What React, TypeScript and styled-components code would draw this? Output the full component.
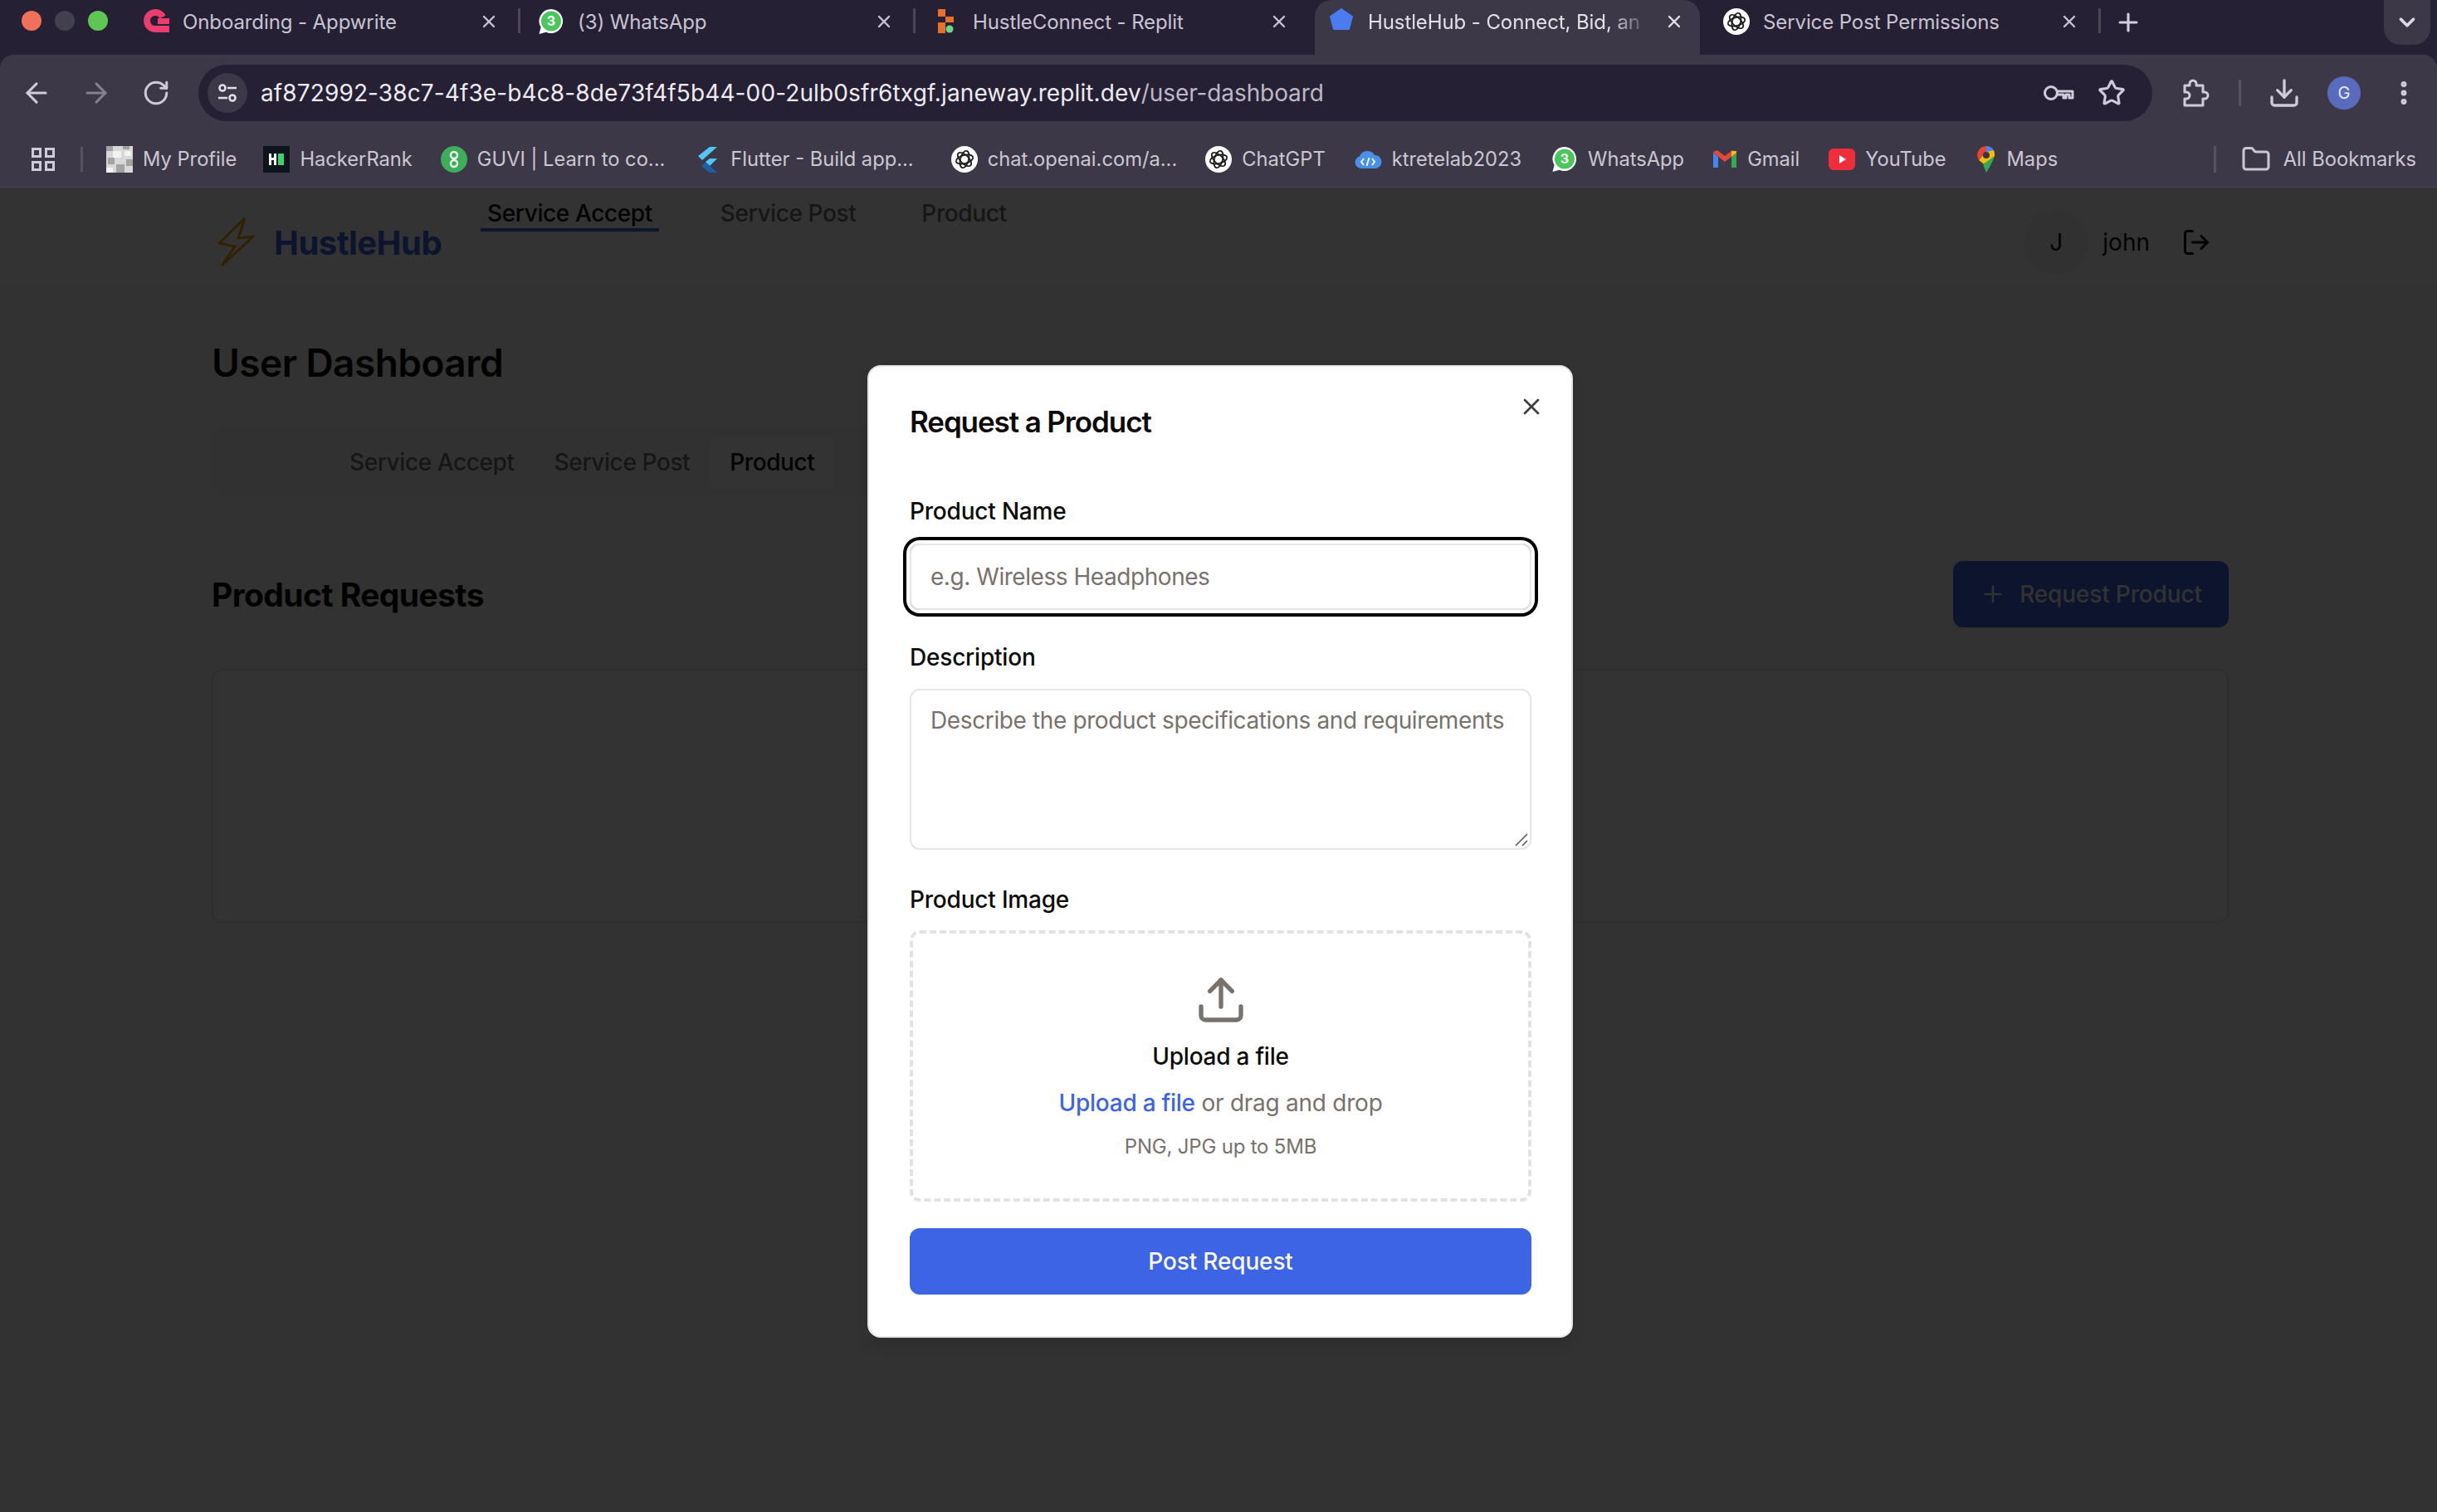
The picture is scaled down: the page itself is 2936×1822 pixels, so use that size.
import React from "react";
import styled, { createGlobalStyle } from "styled-components";
import {
  ArrowLeft,
  ArrowRight,
  ChevronDown,
  Download,
  Folder,
  LogOut,
  MoreVertical,
  Plus,
  RotateCw,
  Star,
  Upload,
  X,
} from "lucide-react";

const GlobalStyle = createGlobalStyle`
  html, body {
    margin: 0;
    padding: 0;
    background: #333;
    font-family: Inter, "Liberation Sans", sans-serif;
  }
  * { box-sizing: border-box; }
`;

const Shell = styled.div`
  width: 2936px;
  height: 1822px;
  display: flex;
  flex-direction: column;
  overflow: hidden;
  background: #252033;
`;

/* browser chrome */
const TabStrip = styled.div`
  height: 66px;
  flex: none;
  display: flex;
  padding-left: 155px;
  position: relative;
`;

const Lights = styled.div`
  position: absolute;
  left: 26px;
  top: 13px;
  display: flex;
  gap: 16px;
`;

const Light = styled.span<{ $color: string }>`
  width: 24px;
  height: 24px;
  border-radius: 50%;
  background: ${(p) => p.$color};
`;

const Tab = styled.div<{ $active?: boolean; $sep?: boolean }>`
  width: 476px;
  flex: none;
  height: 66px;
  padding: 0 30px 14px 17px;
  display: flex;
  align-items: center;
  gap: 16px;
  position: relative;
  color: ${(p) => (p.$active ? "#e4e0ea" : "#c9c4d4")};
  z-index: ${(p) => (p.$active ? 1 : 0)};

  &::before {
    content: "";
    display: ${(p) => (p.$active ? "block" : "none")};
    position: absolute;
    inset: 0 11px 0 1px;
    background: #3c3847;
    border-radius: 20px 20px 0 0;
    z-index: -1;
  }

  &::after {
    content: "";
    display: ${(p) => (p.$sep ? "block" : "none")};
    position: absolute;
    right: 4px;
    top: 10px;
    width: 3px;
    height: 30px;
    background: #4b4757;
  }
`;

const TabTitle = styled.span<{ $fade?: boolean }>`
  flex: 1;
  min-width: 0;
  white-space: nowrap;
  overflow: hidden;
  font-size: 24px;
  letter-spacing: -0.1px;
  mask-image: ${(p) => (p.$fade ? "linear-gradient(90deg, #000 85%, transparent 100%)" : "none")};
`;

const NewTab = styled.div`
  flex: none;
  width: 68px;
  height: 54px;
  margin-left: -5px;
  display: flex;
  align-items: center;
  justify-content: center;
  color: #d3cfdc;
`;

const TabMenu = styled.div`
  position: absolute;
  right: 8px;
  top: 0;
  width: 56px;
  height: 54px;
  border-radius: 0 0 20px 20px;
  background: #3c3847;
  display: flex;
  align-items: center;
  justify-content: center;
  color: #dcd8e4;
`;

const Toolbar = styled.div`
  height: 160px;
  flex: none;
  background: #3c3847;
  border-radius: 16px 16px 0 0;
  border-bottom: 1px solid #4a4658;
  display: flex;
  flex-direction: column;
`;

const AddressRow = styled.div`
  display: flex;
  align-items: center;
  height: 92px;
  padding: 12px 0 12px 8px;
`;

const NavButton = styled.div<{ $dim?: boolean }>`
  width: 72px;
  flex: none;
  display: flex;
  justify-content: center;
  color: ${(p) => (p.$dim ? "#85808f" : "#d0cbd9")};
`;

const AddressBar = styled.div`
  margin-left: 15px;
  width: 2354px;
  flex: none;
  height: 68px;
  border-radius: 34px;
  background: #252033;
  display: flex;
  align-items: center;
  padding: 0 32px 0 11px;
`;

const SiteInfo = styled.div`
  width: 48px;
  height: 48px;
  border-radius: 50%;
  background: #3c3847;
  flex: none;
  display: flex;
  align-items: center;
  justify-content: center;
  color: #e2deea;
`;

const Url = styled.div`
  margin-left: 16px;
  flex: 1;
  font-size: 28px;
  letter-spacing: 0.12px;
  color: #eeebf2;
  white-space: nowrap;

  span {
    letter-spacing: -0.1px;
    color: #bdb8c7;
  }
`;

const AddressActions = styled.div`
  display: flex;
  align-items: center;
  gap: 28px;
  color: #d0cbd9;
`;

const ToolActions = styled.div`
  display: flex;
  align-items: center;
  margin-left: 36px;
  color: #d0cbd9;
`;

const ToolDivider = styled.span<{ $h?: number }>`
  width: 3px;
  height: ${(p) => p.$h ?? 32}px;
  background: #57535f;
  flex: none;
`;

const ExtensionDivider = styled(ToolDivider)`
  margin: 0 32px 0 34px;
`;

const AppsDivider = styled(ToolDivider)`
  margin: 0 28px 0 31px;
`;

const AllDivider = styled(ToolDivider)`
  margin-left: auto;
`;

const ProfileBubble = styled.div`
  width: 40px;
  height: 40px;
  margin: 0 34px 0 32px;
  border-radius: 50%;
  background: #5a6bbd;
  color: #e8e9f6;
  font-size: 20px;
  display: flex;
  align-items: center;
  justify-content: center;
`;

const BookmarkRow = styled.div`
  flex: 1;
  display: flex;
  align-items: center;
  padding: 0 25px 0 38px;
`;

const Bookmark = styled.div<{ $after?: number }>`
  display: flex;
  align-items: center;
  gap: 12px;
  margin-right: ${(p) => 34 + (p.$after ?? 0)}px;
  font-size: 23.7px;
  color: #cbc7d3;
  white-space: nowrap;
`;

const AllBookmarks = styled(Bookmark)`
  margin: 0 0 0 30px;
  gap: 15px;
`;

/* page under the dialog */
const Page = styled.div`
  flex: 1;
  position: relative;
  background: #fafaf9;
  min-height: 0;
`;

const Header = styled.header`
  height: 121px;
  background: #fff;
  border-bottom: 1px solid #f5f5f4;
  display: flex;
  padding: 14px 0 0 263px;
`;

const Logo = styled.div`
  display: flex;
  align-items: center;
  gap: 23px;
  margin-top: 22px;
  align-self: flex-start;
  height: 60px;
  font-size: 40px;
  font-weight: 700;
  letter-spacing: -0.5px;
  color: #3c64e4;
`;

const TopNav = styled.nav`
  display: flex;
  gap: 63px;
  margin-left: 47px;
  align-items: flex-start;

  a:first-child {
    margin-right: 3px;
  }
`;

const TopLink = styled.a<{ $active?: boolean }>`
  padding: 0 8px;
  height: 39px;
  line-height: 34px;
  font-size: 28px;
  font-weight: 500;
  letter-spacing: -0.4px;
  color: ${(p) => (p.$active ? "#0c0a09" : "#78716c")};
  border-bottom: 4px solid ${(p) => (p.$active ? "#3c64e4" : "transparent")};
`;

const UserBox = styled.div`
  margin-left: auto;
  margin-right: 272px;
  height: 79px;
  margin-top: 12px;
  display: flex;
  align-items: center;
  font-size: 28px;
  color: #0c0a09;
`;

const UserCircle = styled.div`
  width: 78px;
  height: 78px;
  border-radius: 50%;
  background: #f5f5f4;
  display: flex;
  align-items: center;
  justify-content: center;
  margin-right: 17px;
`;

const UserName = styled.span`
  margin-right: 38px;
`;

const Main = styled.main`
  padding: 60px 251px 0 255px;
`;

const PageTitle = styled.h1`
  margin: 0;
  font-size: 46px;
  line-height: 60px;
  font-weight: 600;
  letter-spacing: -0.55px;
  color: #0c0a09;
`;

const TabsList = styled.div`
  margin-top: 50px;
  height: 80px;
  width: 900px;
  border-radius: 12px;
  background: #f5f5f4;
  display: flex;
  align-items: center;
  padding-left: 142px;
`;

const TabTrigger = styled.div<{ $active?: boolean }>`
  height: 63px;
  padding: 0 24px;
  border-radius: 8px;
  display: flex;
  align-items: center;
  font-size: 28px;
  font-weight: 500;
  letter-spacing: -0.4px;
  color: ${(p) => (p.$active ? "#0c0a09" : "#78716c")};
  background: ${(p) => (p.$active ? "#fff" : "transparent")};
`;

const SectionRow = styled.div`
  margin-top: 79px;
  display: flex;
  align-items: center;
  justify-content: space-between;
`;

const SectionTitle = styled.h2`
  margin: 0;
  font-size: 39px;
  font-weight: 700;
  letter-spacing: -0.6px;
  color: #0c0a09;
`;

const PrimaryButton = styled.button`
  width: 332px;
  height: 80px;
  border: 0;
  border-radius: 12px;
  background: #3c64e4;
  color: #fafaf9;
  font: 500 28px Inter, "Liberation Sans", sans-serif;
  letter-spacing: -0.15px;
  display: flex;
  align-items: center;
  justify-content: center;
  gap: 16px;
`;

const EmptyCard = styled.div`
  margin-top: 50px;
  height: 306px;
  border-radius: 12px;
  background: #fff;
  border: 2px solid #e7e5e4;
`;

/* dialog */
const Overlay = styled.div`
  position: absolute;
  inset: 0;
  background: rgba(0, 0, 0, 0.8);
  display: flex;
  align-items: flex-start;
  justify-content: center;
  padding: 214px 0 0 4px;
`;

const Dialog = styled.div`
  width: 850px;
  height: 1172px;
  background: #fff;
  border: 2px solid #e7e5e4;
  border-radius: 16px;
  padding: 44px 48px 0 49px;
  position: relative;
  box-shadow: 0 10px 15px rgba(0, 0, 0, 0.1);
`;

const CloseButton = styled.div`
  position: absolute;
  top: 32px;
  right: 32px;
  color: #3f3f3f;
  display: flex;
`;

const DialogTitle = styled.h3`
  margin: 0 0 69px;
  font-size: 35px;
  line-height: 44px;
  font-weight: 600;
  letter-spacing: -1.100px;
  color: #0c0a09;
`;

const Field = styled.div`
  display: flex;
  flex-direction: column;
`;

const Label = styled.label`
  font-size: 28px;
  line-height: 34px;
  font-weight: 500;
  letter-spacing: -0.2px;
  color: #0c0a09;
`;

const TextInput = styled.div`
  margin-top: 22px;
  height: 80px;
  border: 2px solid #e7e5e4;
  border-radius: 12px;
  padding: 0 23px;
  display: flex;
  align-items: center;
  font-size: 28px;
  letter-spacing: -0.45px;
  color: #78716c;
  box-shadow: 0 0 0 4px #fff, 0 0 0 8px #000;
  margin-bottom: 40px;
`;

const TextArea = styled.div`
  margin-top: 21px;
  height: 194px;
  border: 2px solid #e7e5e4;
  border-radius: 12px;
  padding: 19px 23px;
  font-size: 28px;
  line-height: 34px;
  letter-spacing: -0.38px;
  color: #78716c;
  white-space: nowrap;
  position: relative;
  margin-bottom: 43px;
`;

const Resizer = styled.svg`
  position: absolute;
  right: 2px;
  bottom: 2px;
`;

const DropZone = styled.div`
  margin-top: 20px;
  height: 327px;
  border: 4px dashed #e4e2e1;
  border-radius: 12px;
  display: flex;
  flex-direction: column;
  align-items: center;
  padding-top: 48px;
  color: #78716c;
  font-size: 28px;
`;

const DropTitle = styled.div`
  margin-top: 19px;
  line-height: 34px;
  font-weight: 500;
  letter-spacing: -0.25px;
  color: #0c0a09;
`;

const DropHint = styled.div`
  margin-top: 22px;
  line-height: 34px;
  letter-spacing: -0.25px;

  b {
    font-weight: 500;
    color: #3c64e4;
  }
`;

const DropNote = styled.div`
  margin-top: 21px;
  font-size: 24px;
  line-height: 30px;
  letter-spacing: -0.2px;
`;

const SubmitButton = styled(PrimaryButton)`
  margin-top: 32px;
  width: 100%;
`;

/* favicons and other small drawings */
const Appwrite = () => (
  <svg width="32" height="32" viewBox="0 0 32 32">
    <path d="M24 10.500A10 10 0 1 0 15 25h17" fill="none" stroke="#ea3f6e" strokeWidth="8" />
    <path d="M18 12h14v7H18z" fill="#ea3f6e" />
  </svg>
);

const WhatsApp = () => (
  <svg width="32" height="32" viewBox="0 0 32 32">
    <path d="M16 1a14.500 14.500 0 0 0-12.400 22L1.500 31l8.300-2.200A14.500 14.500 0 1 0 16 1z" fill="#fff" />
    <circle cx="16" cy="15.500" r="12" fill="#4ac75c" />
    <text x="16" y="21" textAnchor="middle" fontSize="16" fontWeight="700" fill="#fff" fontFamily="Inter">3</text>
  </svg>
);

const Replit = () => (
  <svg width="32" height="32" viewBox="0 0 32 32">
    <path d="M6 1h9v9H6zM15 10h10v7H15zM6 17h9v13H6z" fill="#e8702a" />
    <circle cx="20" cy="25" r="4.500" fill="#6bd68b" />
  </svg>
);

const Pentagon = () => (
  <svg width="32" height="32" viewBox="0 0 32 32">
    <path d="M16 1l13 9-4 15H7L3 10z" fill="#4a7cf0" strokeLinejoin="round" stroke="#4a7cf0" strokeWidth="2" />
  </svg>
);

const OpenAI = () => (
  <svg width="32" height="32" viewBox="0 0 32 32" fill="none" stroke="#1a1a1a" strokeWidth="1.700">
    <circle cx="16" cy="16" r="16" fill="#fff" stroke="none" />
    <ellipse cx="16" cy="16" rx="5" ry="10.500" transform="rotate(15 16 16)" />
    <ellipse cx="16" cy="16" rx="5" ry="10.500" transform="rotate(75 16 16)" />
    <ellipse cx="16" cy="16" rx="5" ry="10.500" transform="rotate(135 16 16)" />
  </svg>
);

const ProfileThumb = () => (
  <svg width="32" height="32" viewBox="0 0 32 32">
    <rect width="32" height="32" fill="#d8d8d8" />
    <path d="M0 0h8v6H0zM20 0h8v4h-8zM2 14h8v8H2zM12 22h10v10H12zM24 16h8v8h-8z" fill="#a3a3a3" />
    <path d="M8 6h10v8H8zM0 26h8v6H0zM22 6h8v6h-8z" fill="#f2f2f2" />
  </svg>
);

const HackerRank = () => (
  <svg width="32" height="32" viewBox="0 0 32 32">
    <rect width="32" height="32" fill="#0e141e" />
    <path d="M7 9h3v5h3V9h3v14h-3v-6h-3v6H7z" fill="#fff" />
    <rect x="18" y="9" width="7" height="14" fill="#39d26f" />
  </svg>
);

const Guvi = () => (
  <svg width="32" height="32" viewBox="0 0 32 32">
    <circle cx="16" cy="16" r="16" fill="#3fae5c" />
    <circle cx="16" cy="11" r="4" fill="none" stroke="#e8f7ec" strokeWidth="2.500" />
    <circle cx="16" cy="21" r="4" fill="none" stroke="#e8f7ec" strokeWidth="2.500" />
  </svg>
);

const Flutter = () => (
  <svg width="32" height="32" viewBox="0 0 32 32">
    <path d="M19 1h9L10 17l-5-5z" fill="#54c5f8" />
    <path d="M19 15h9l-9 9-5-5z" fill="#54c5f8" />
    <path d="M14 19l5 5 9 8h-9l-10-8z" fill="#1c5fa8" />
  </svg>
);

const CloudCode = () => (
  <svg width="34" height="32" viewBox="0 0 34 32">
    <path d="M9 27a7.500 7.500 0 0 1-2-14.700A10 10 0 0 1 25 11a8 8 0 0 1 1 16z" fill="#4a90e8" />
    <path d="M12 15l-3 4 3 4M22 15l3 4-3 4M18.500 14l-3 10" stroke="#fff" strokeWidth="1.800" fill="none" />
  </svg>
);

const Gmail = () => (
  <svg width="30" height="32" viewBox="0 0 30 32">
    <path d="M1 8v18h6V13z" fill="#4285f4" />
    <path d="M23 13v13h6V8z" fill="#34a853" />
    <path d="M1 8l14 11L29 8v-1l-5-2-9 7-9-7-5 2z" fill="#e04a38" />
    <path d="M23 13l6-5V6l-6 0z" fill="#f6bb1c" />
  </svg>
);

const YouTube = () => (
  <svg width="32" height="32" viewBox="0 0 32 32">
    <rect y="3" width="32" height="26" rx="6" fill="#ee2d3d" />
    <path d="M13 11l8 5-8 5z" fill="#fff" />
  </svg>
);

const Maps = () => (
  <svg width="24" height="32" viewBox="0 0 24 32">
    <path d="M12 0a11 11 0 0 0-9 17l9-10z" fill="#ea4335" />
    <path d="M12 0a11 11 0 0 1 9 5l-9 8z" fill="#4285f4" />
    <path d="M3 17l9-10 9-2a11 11 0 0 1 1 7L12 24z" fill="#fbbc04" />
    <path d="M12 32s7-11 10-20L8 22z" fill="#34a853" />
    <circle cx="12" cy="11" r="4" fill="#3a3646" />
  </svg>
);

const AppsGrid = () => (
  <svg width="28" height="28" viewBox="0 0 28 28" fill="none" stroke="#d0cbd9" strokeWidth="3">
    <rect x="1.500" y="1.500" width="9" height="9" />
    <rect x="17.500" y="1.500" width="9" height="9" />
    <rect x="1.500" y="17.500" width="9" height="9" />
    <rect x="17.500" y="17.500" width="9" height="9" />
  </svg>
);

const TuneIcon = () => (
  <svg width="28" height="24" viewBox="0 0 28 24" fill="none" stroke="currentColor" strokeWidth="2.600">
    <circle cx="8" cy="6" r="3.500" />
    <path d="M14 6h11M3 18h11" />
    <circle cx="20" cy="18" r="3.500" />
  </svg>
);

const KeyIcon = () => (
  <svg width="38" height="24" viewBox="0 0 38 24" fill="none" stroke="currentColor" strokeWidth="3">
    <circle cx="10" cy="12" r="7.500" />
    <path d="M18 10h18v8h-4v-4h-4v4h-3v-4h-7" strokeLinejoin="round" />
  </svg>
);

const PuzzleIcon = () => (
  <svg width="34" height="34" viewBox="0 0 34 34" fill="none" stroke="currentColor" strokeWidth="3" strokeLinejoin="round">
    <path d="M3 8h6V6a4 4 0 0 1 8 0v2h8v8h2a4 4 0 0 1 0 8h-2v8H3v-8h2a4 4 0 0 0 0-8H3z" />
  </svg>
);

const Bolt = () => (
  <svg width="44" height="60" viewBox="0 0 44 60" fill="none" stroke="#f59e0b" strokeWidth="3" strokeLinejoin="miter">
    <path d="M32 1L1 31l19 4L4 58l38-35-18 2z" />
  </svg>
);

const tabs = [
  { icon: <Appwrite />, title: "Onboarding - Appwrite", sep: true },
  { icon: <WhatsApp />, title: "(3) WhatsApp", sep: true },
  { icon: <Replit />, title: "HustleConnect - Replit", sep: false },
  { icon: <Pentagon />, title: "HustleHub - Connect, Bid, an", active: true },
  { icon: <OpenAI />, title: "Service Post Permissions", sep: true },
];

const bookmarks = [
  { icon: <ProfileThumb />, label: "My Profile", after: -2 },
  { icon: <HackerRank />, label: "HackerRank" },
  { icon: <Guvi />, label: "GUVI | Learn to co...", after: 1 },
  { icon: <Flutter />, label: "Flutter - Build app...", after: 11 },
  { icon: <OpenAI />, label: "chat.openai.com/a..." },
  { icon: <OpenAI />, label: "ChatGPT" },
  { icon: <CloudCode />, label: "ktretelab2023", after: 2 },
  { icon: <WhatsApp />, label: "WhatsApp" },
  { icon: <Gmail />, label: "Gmail", after: 1 },
  { icon: <YouTube />, label: "YouTube", after: 3 },
  { icon: <Maps />, label: "Maps" },
];

const App = () => {
  return (
    <Shell>
      <GlobalStyle />
      <TabStrip>
        <Lights>
          <Light $color="#f1705c" />
          <Light $color="#43404f" />
          <Light $color="#5fc655" />
        </Lights>
        {tabs.map((t) => (
          <Tab key={t.title} $active={t.active} $sep={t.sep}>
            {t.icon}
            <TabTitle $fade={t.active}>{t.title}</TabTitle>
            <X size={24} strokeWidth={2.4} />
          </Tab>
        ))}
        <NewTab>
          <Plus size={34} strokeWidth={2.2} />
        </NewTab>
        <TabMenu>
          <ChevronDown size={30} strokeWidth={3} />
        </TabMenu>
      </TabStrip>

      <Toolbar>
        <AddressRow>
          <NavButton>
            <ArrowLeft size={38} strokeWidth={1.9} />
          </NavButton>
          <NavButton $dim>
            <ArrowRight size={38} strokeWidth={1.9} />
          </NavButton>
          <NavButton>
            <RotateCw size={34} strokeWidth={2.1} />
          </NavButton>
          <AddressBar>
            <SiteInfo>
              <TuneIcon />
            </SiteInfo>
            <Url>
              af872992-38c7-4f3e-b4c8-8de73f4f5b44-00-2ulb0sfr6txgf.janeway.replit.dev
              <span>/user-dashboard</span>
            </Url>
            <AddressActions>
              <KeyIcon />
              <Star size={34} strokeWidth={2.2} />
            </AddressActions>
          </AddressBar>
          <ToolActions>
            <PuzzleIcon />
            <ExtensionDivider />
            <Download size={40} strokeWidth={2} />
            <ProfileBubble>G</ProfileBubble>
            <MoreVertical size={36} strokeWidth={2.6} />
          </ToolActions>
        </AddressRow>
        <BookmarkRow>
          <AppsGrid />
          <AppsDivider $h={30} />
          {bookmarks.map((b) => (
            <Bookmark key={b.label} $after={b.after}>
              {b.icon}
              {b.label}
            </Bookmark>
          ))}
          <AllDivider />
          <AllBookmarks>
            <Folder size={36} strokeWidth={2} />
            All Bookmarks
          </AllBookmarks>
        </BookmarkRow>
      </Toolbar>

      <Page>
        <Header>
          <Logo>
            <Bolt />
            HustleHub
          </Logo>
          <TopNav>
            <TopLink $active>Service Accept</TopLink>
            <TopLink>Service Post</TopLink>
            <TopLink>Product</TopLink>
          </TopNav>
          <UserBox>
            <UserCircle>J</UserCircle>
            <UserName>john</UserName>
            <LogOut size={36} strokeWidth={2} />
          </UserBox>
        </Header>
        <Main>
          <PageTitle>User Dashboard</PageTitle>
          <TabsList>
            <TabTrigger>Service Accept</TabTrigger>
            <TabTrigger>Service Post</TabTrigger>
            <TabTrigger $active>Product</TabTrigger>
          </TabsList>
          <SectionRow>
            <SectionTitle>Product Requests</SectionTitle>
            <PrimaryButton>
              <Plus size={32} strokeWidth={2} />
              Request Product
            </PrimaryButton>
          </SectionRow>
          <EmptyCard />
        </Main>

        <Overlay>
          <Dialog>
            <CloseButton>
              <X size={32} strokeWidth={2} />
            </CloseButton>
            <DialogTitle>Request a Product</DialogTitle>
            <Field>
              <Label>Product Name</Label>
              <TextInput>e.g. Wireless Headphones</TextInput>
            </Field>
            <Field>
              <Label>Description</Label>
              <TextArea>
                Describe the product specifications and requirements
                <Resizer width="18" height="18" viewBox="0 0 18 18" stroke="#555" strokeWidth="1.500">
                  <path d="M3 17L17 3M11 17l6-6" />
                </Resizer>
              </TextArea>
            </Field>
            <Field>
              <Label>Product Image</Label>
              <DropZone>
                <Upload size={64} strokeWidth={2} />
                <DropTitle>Upload a file</DropTitle>
                <DropHint>
                  <b>Upload a file</b> or drag and drop
                </DropHint>
                <DropNote>PNG, JPG up to 5MB</DropNote>
              </DropZone>
            </Field>
            <SubmitButton>Post Request</SubmitButton>
          </Dialog>
        </Overlay>
      </Page>
    </Shell>
  );
};

export default App;
